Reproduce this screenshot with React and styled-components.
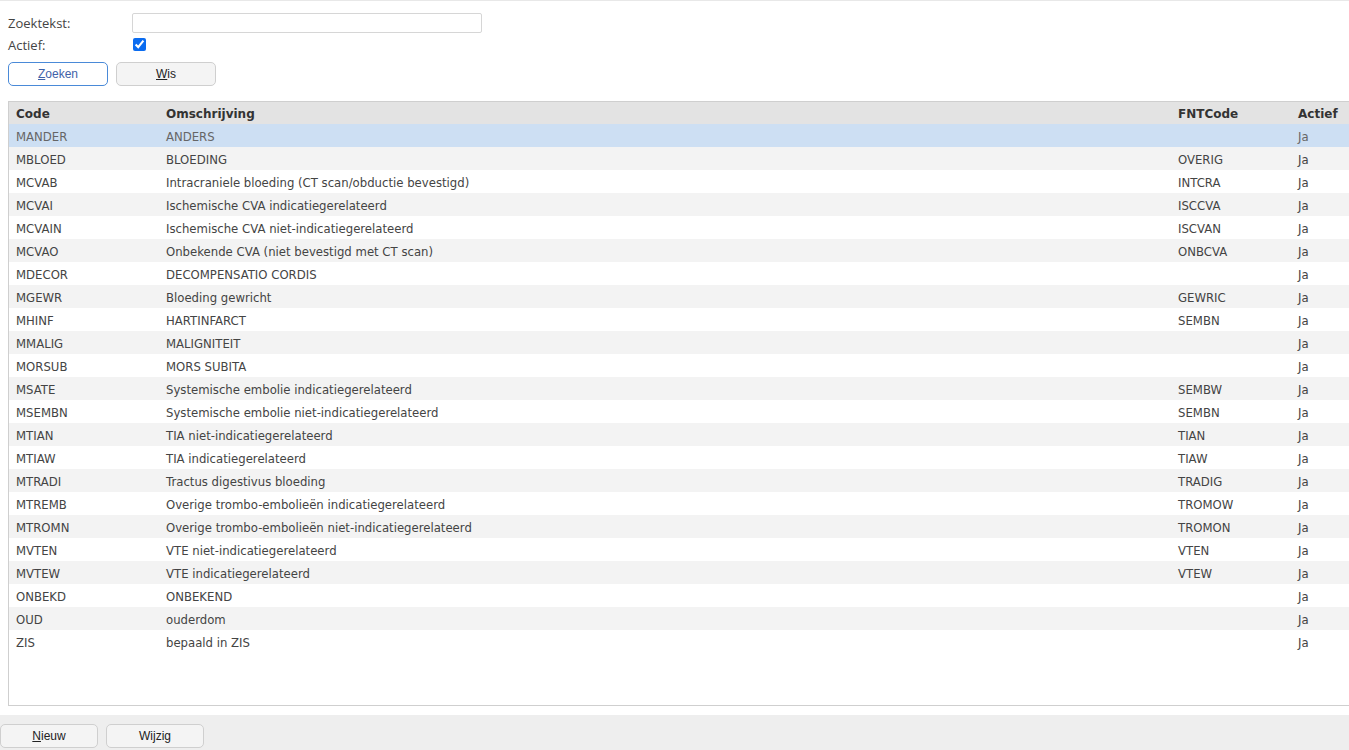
import styled, { createGlobalStyle } from 'styled-components';

const GlobalStyle = createGlobalStyle`
	html, body {
		margin: 0;
		padding: 0;
		background: #fff;
		overflow: hidden;
	}
	body {
		font-family: "Open Sans", "Liberation Sans", sans-serif;
		color: #333;
	}
`;

const rows = [
	['MANDER', 'ANDERS', '', 'Ja'],
	['MBLOED', 'BLOEDING', 'OVERIG', 'Ja'],
	['MCVAB', 'Intracraniele bloeding (CT scan/obductie bevestigd)', 'INTCRA', 'Ja'],
	['MCVAI', 'Ischemische CVA indicatiegerelateerd', 'ISCCVA', 'Ja'],
	['MCVAIN', 'Ischemische CVA niet-indicatiegerelateerd', 'ISCVAN', 'Ja'],
	['MCVAO', 'Onbekende CVA (niet bevestigd met CT scan)', 'ONBCVA', 'Ja'],
	['MDECOR', 'DECOMPENSATIO CORDIS', '', 'Ja'],
	['MGEWR', 'Bloeding gewricht', 'GEWRIC', 'Ja'],
	['MHINF', 'HARTINFARCT', 'SEMBN', 'Ja'],
	['MMALIG', 'MALIGNITEIT', '', 'Ja'],
	['MORSUB', 'MORS SUBITA', '', 'Ja'],
	['MSATE', 'Systemische embolie indicatiegerelateerd', 'SEMBW', 'Ja'],
	['MSEMBN', 'Systemische embolie niet-indicatiegerelateerd', 'SEMBN', 'Ja'],
	['MTIAN', 'TIA niet-indicatiegerelateerd', 'TIAN', 'Ja'],
	['MTIAW', 'TIA indicatiegerelateerd', 'TIAW', 'Ja'],
	['MTRADI', 'Tractus digestivus bloeding', 'TRADIG', 'Ja'],
	['MTREMB', 'Overige trombo-embolieën indicatiegerelateerd', 'TROMOW', 'Ja'],
	['MTROMN', 'Overige trombo-embolieën niet-indicatiegerelateerd', 'TROMON', 'Ja'],
	['MVTEN', 'VTE niet-indicatiegerelateerd', 'VTEN', 'Ja'],
	['MVTEW', 'VTE indicatiegerelateerd', 'VTEW', 'Ja'],
	['ONBEKD', 'ONBEKEND', '', 'Ja'],
	['OUD', 'ouderdom', '', 'Ja'],
	['ZIS', 'bepaald in ZIS', '', 'Ja'],
];

const Page = styled.div`
	display: flex;
	flex-direction: column;
	height: 750px;
	border-top: 1px solid #e8e8e8;
	box-sizing: border-box;
`;

const SearchForm = styled.div`
	display: grid;
	grid-template-columns: 124px 350px;
	grid-auto-rows: 22px;
	align-items: center;
	padding: 11px 8px 0;
`;

const Label = styled.label`
	font-size: 13px;
	color: #444;
`;

const TextInput = styled.input`
	height: 20px;
	box-sizing: border-box;
	border: 1px solid #d6d6d6;
	border-radius: 2px;
	margin: 0;
	outline: none;
`;

const Check = styled.input`
	width: 13px;
	height: 13px;
	margin: 0 0 2px 1px;
	accent-color: #0b6cf0;
`;

const ButtonBar = styled.div`
	display: flex;
	gap: 8px;
	padding: ${p => p.$padding || '0'};
	background: ${p => p.$bg || 'transparent'};
`;

const Button = styled.button`
	width: ${p => p.$w || '100px'};
	height: 24px;
	box-sizing: border-box;
	border-radius: 5px;
	border: 1px solid ${p => (p.$focus ? '#4a8ad8' : '#cfcfcf')};
	background: ${p => (p.$focus ? '#fff' : '#f4f4f4')};
	color: ${p => (p.$focus ? '#3f62a8' : '#222')};
	font-family: "Liberation Sans", Arial, sans-serif;
	font-size: 12px;
	padding: 0;
	& u {
		text-decoration: underline;
	}
`;

const Grid = styled.div`
	margin: 15px 0 0 8px;
	width: 1400px;
	height: 605px;
	box-sizing: border-box;
	border: 1px solid #cfcfcf;
	font-family: "DejaVu Sans", Verdana, sans-serif;
`;

const Row = styled.div`
	display: grid;
	grid-template-columns: 150px 1012px 120px 1fr;
	height: ${p => (p.$head ? '22px' : '23px')};
	align-items: center;
	background: ${p =>
		p.$head ? '#e3e3e3' : p.$selected ? '#cddff3' : p.$odd ? '#f3f3f3' : '#fff'};
	color: ${p => (p.$head ? '#333' : p.$selected ? '#666' : '#444')};
	font-weight: ${p => (p.$head ? 'bold' : 'normal')};
	font-size: ${p => (p.$head ? '12px' : '11.7px')};
`;

const Cell = styled.div`
	padding-left: 7px;
	padding-top: 2px;
	white-space: nowrap;
	overflow: hidden;
`;

const Footer = styled(ButtonBar)`
	margin-top: auto;
	height: 35px;
	box-sizing: border-box;
	align-items: flex-end;
	padding-bottom: 2px;
`;

export default function App() {
	return (
		<>
			<GlobalStyle />
			<Page>
				<SearchForm>
					<Label>Zoektekst:</Label>
					<TextInput type="text" />
					<Label>Actief:</Label>
					<Check type="checkbox" defaultChecked />
				</SearchForm>
				<ButtonBar $padding="6px 8px 0">
					<Button $focus><u>Z</u>oeken</Button>
					<Button><u>W</u>is</Button>
				</ButtonBar>
				<Grid>
					<Row $head>
						<Cell>Code</Cell>
						<Cell>Omschrijving</Cell>
						<Cell>FNTCode</Cell>
						<Cell>Actief</Cell>
					</Row>
					{rows.map((r, i) => (
						<Row key={r[0]} $selected={i === 0} $odd={i % 2 === 1}>
							{r.map((c, j) => (
								<Cell key={j}>{c}</Cell>
							))}
						</Row>
					))}
				</Grid>
				<Footer $bg="#eeeeee">
					<Button $w="98px"><u>N</u>ieuw</Button>
					<Button $w="98px">Wijzig</Button>
				</Footer>
			</Page>
		</>
	);
}
